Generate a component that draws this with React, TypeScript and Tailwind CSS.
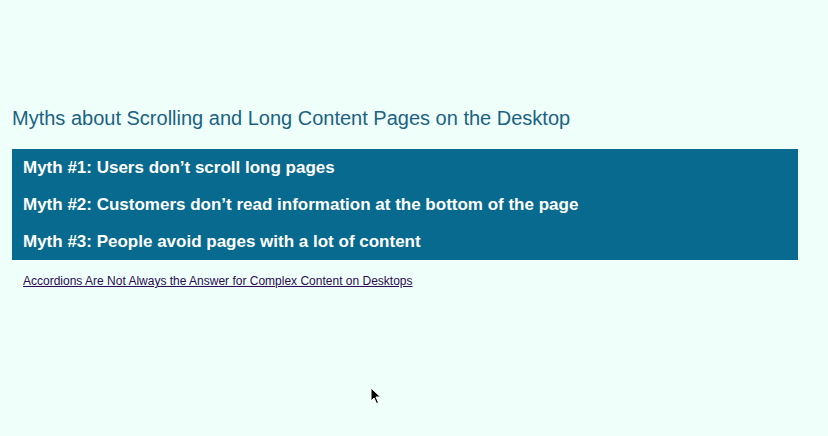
export default function App() {
  const myths = [
    "Myth #1: Users don\u2019t scroll long pages",
    "Myth #2: Customers don\u2019t read information at the bottom of the page",
    "Myth #3: People avoid pages with a lot of content",
  ];

  return (
    <div className="relative h-[436px] w-[828px] overflow-hidden bg-[#effffa] font-['Liberation_Sans',Arial,sans-serif]">
      <div className="pl-3 pr-[30px] pt-[106px]">
        <h1 className="text-[20px] leading-[24px] text-[#1b6284]">
          Myths about Scrolling and Long Content Pages on the Desktop
        </h1>
        <div className="mt-[19px] flex flex-col bg-[#086a8e]">
          {myths.map((m) => (
            <div key={m} className="h-[37px] pl-[11px] pt-[9px] text-[17px] font-bold leading-[20px] text-white">
              {m}
            </div>
          ))}
        </div>
        <div className="pl-[11px] pt-[8px]">
          <a href="#" className="text-[12px] leading-[14px] text-[#2b0b55] underline">
            Accordions Are Not Always the Answer for Complex Content on Desktops
          </a>
        </div>
      </div>
      <svg className="absolute left-[370px] top-[387px]" width="12" height="18" viewBox="0 0 12 18">
        <path d="M1 1 L1 14 L4 11 L6.5 16.5 L8.5 15.5 L6 10 L10.5 10 Z" fill="#000" stroke="#fff" strokeWidth="1" />
      </svg>
    </div>
  );
}
